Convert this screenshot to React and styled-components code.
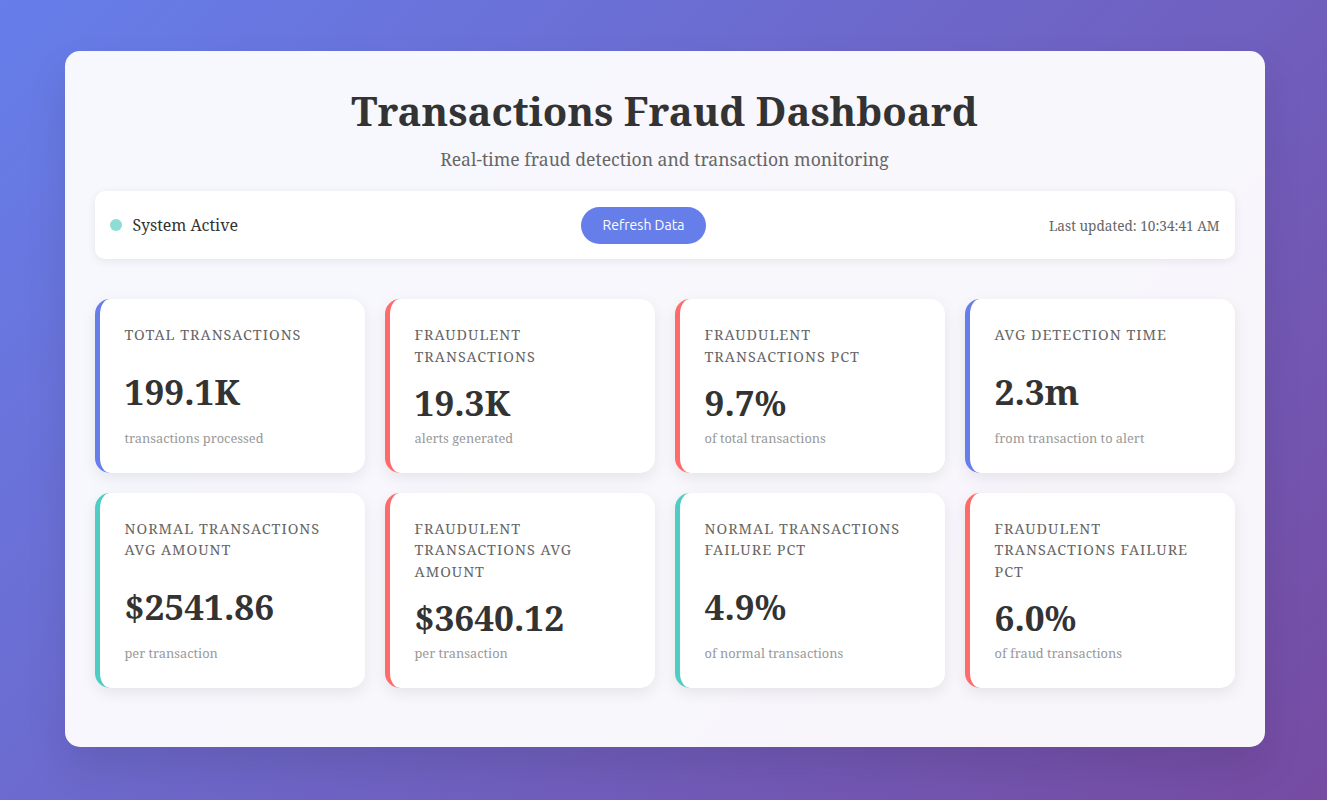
import React from "react";
import styled, { createGlobalStyle } from "styled-components";

const GlobalStyle = createGlobalStyle`
  * { box-sizing: border-box; }
  html, body { margin: 0; padding: 0; }
  body {
    min-height: 800px;
    background: linear-gradient(135deg, #667eea 0%, #764ba2 100%);
    font-family: "Noto Serif", "DejaVu Serif", serif;
    color: #333;
  }
`;

const Page = styled.div`
  padding: 51px 19px 52px 21px;
`;

const Container = styled.div`
  max-width: 1200px;
  margin: 0 auto;
  background: rgba(255, 255, 255, 0.95);
  border-radius: 15px;
  padding: 30px 30px 59px;
  box-shadow: 0 20px 40px rgba(0, 0, 0, 0.1);
`;

const Header = styled.header`
  text-align: center;
  margin-bottom: 19px;
`;

const Title = styled.h1`
  margin: 0 0 5px;
  font-size: 40px;
  line-height: 1.5;
  font-weight: 700;
  color: #333;
`;

const Subtitle = styled.p`
  margin: 0;
  font-size: 17.6px;
  line-height: 1.5;
  color: #666;
`;

const StatusBar = styled.div`
  display: flex;
  align-items: center;
  justify-content: space-between;
  background: #fff;
  border-radius: 10px;
  padding: 15px 15px;
  height: 68px;
  margin-bottom: 40px;
  box-shadow: 0 2px 10px rgba(0, 0, 0, 0.08);
`;

const Status = styled.div`
  display: flex;
  align-items: center;
  gap: 11px;
  font-size: 16px;
  color: #333;
`;

const Dot = styled.span`
  width: 12px;
  height: 12px;
  border-radius: 50%;
  background: #8edcd6;
`;

const RefreshButton = styled.button`
  background: #667eea;
  color: #fff;
  border: none;
  border-radius: 20px;
  height: 37px;
  padding: 0 22px;
  font-family: "Ubuntu", "Noto Sans", sans-serif;
  font-size: 14px;
  cursor: pointer;
`;

const Updated = styled.div`
  text-align: right;
  font-size: 13.6px;
  color: #666;
`;

const Grid = styled.div`
  display: grid;
  grid-template-columns: repeat(4, 1fr);
  gap: 20px;
`;

const Card = styled.div`
  display: flex;
  flex-direction: column;
  justify-content: space-between;
  background: #fff;
  border-radius: 15px;
  border-left: 5px solid ${(p) => p.$accent};
  padding: 25px 25px;
  box-shadow: 0 5px 15px rgba(0, 0, 0, 0.08);
`;

const Label = styled.div`
  font-size: 14.4px;
  line-height: 1.5;
  letter-spacing: 1px;
  text-transform: uppercase;
  color: #666;
  margin-bottom: 13px;
`;

const Value = styled.div`
  font-size: 35.2px;
  line-height: 1.2;
  font-weight: 700;
  color: #333;
  margin-bottom: 7px;
`;

const Note = styled.div`
  font-size: 12.8px;
  line-height: 1.4;
  color: #999;
`;

const BLUE = "#667eea";
const RED = "#ff6b6b";
const TEAL = "#4ecdc4";

const metrics = [
  { label: "Total Transactions", value: "199.1K", note: "transactions processed", accent: BLUE },
  { label: "Fraudulent Transactions", value: "19.3K", note: "alerts generated", accent: RED },
  { label: "Fraudulent Transactions PCT", value: "9.7%", note: "of total transactions", accent: RED },
  { label: "Avg Detection Time", value: "2.3m", note: "from transaction to alert", accent: BLUE },
  { label: "Normal Transactions Avg Amount", value: "$2541.86", note: "per transaction", accent: TEAL },
  { label: "Fraudulent Transactions Avg Amount", value: "$3640.12", note: "per transaction", accent: RED },
  { label: "Normal Transactions Failure PCT", value: "4.9%", note: "of normal transactions", accent: TEAL },
  { label: "Fraudulent Transactions Failure PCT", value: "6.0%", note: "of fraud transactions", accent: RED },
];

export default function App() {
  return (
    <>
      <GlobalStyle />
      <Page>
        <Container>
          <Header>
            <Title>Transactions Fraud Dashboard</Title>
            <Subtitle>Real-time fraud detection and transaction monitoring</Subtitle>
          </Header>

          <StatusBar>
            <Status>
              <Dot />
              System Active
            </Status>
            <RefreshButton>Refresh Data</RefreshButton>
            <Updated>Last updated: 10:34:41 AM</Updated>
          </StatusBar>

          <Grid>
            {metrics.map((m) => (
              <Card key={m.label} $accent={m.accent}>
                <Label>{m.label}</Label>
                <Value>{m.value}</Value>
                <Note>{m.note}</Note>
              </Card>
            ))}
          </Grid>
        </Container>
      </Page>
    </>
  );
}
